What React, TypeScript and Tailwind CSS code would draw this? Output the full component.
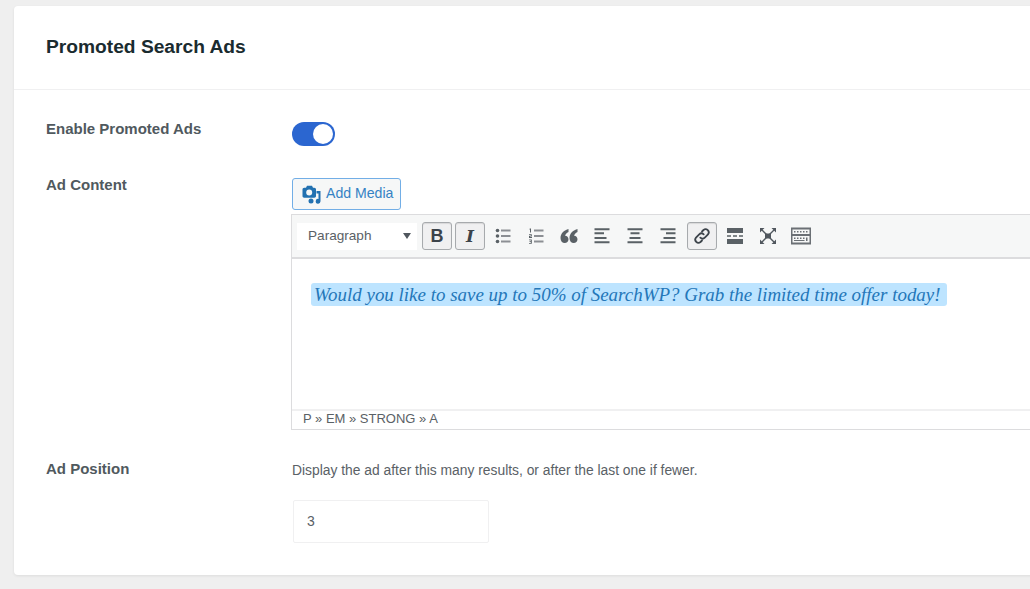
import React from "react";

const Ic = ({ children, w = 20 }: { children: React.ReactNode; w?: number }) => (
  <svg width={w} height={20} viewBox="0 0 20 20" fill="#5a6166" className="shrink-0">{children}</svg>
);

const Btn = ({ children, active, extra }: { children: React.ReactNode; active?: boolean; extra?: boolean }) => (
  <div className={active ? "w-[30px] h-[28px] flex items-center justify-center rounded-[3px] border border-[#a7aaad] bg-[#f0f0f1] mr-[3px] shadow-[inset_0_1px_1px_rgba(0,0,0,0.1)]" : extra ? "w-[30px] h-[28px] flex items-center justify-center mr-[4px]" : "w-[30px] h-[28px] flex items-center justify-center mr-[3px]"}>
    {children}
  </div>
);

const labelCls = "w-[246px] shrink-0 -mt-[1px] text-[15px] leading-[16px] font-bold text-[#50595e]";

export default function App() {
  return (
    <div className="w-[1030px] h-[589px] overflow-hidden bg-[#efefef] pt-[6px] pl-[14px] font-['Liberation_Sans',Arial,sans-serif]">
      <div className="w-[1040px] h-[569px] bg-white rounded-[4px] shadow-[0_1px_3px_rgba(0,0,0,0.08)]">
        <div className="h-[84px] border-b border-[#f0f0f1] pl-[32px] flex items-center pb-[1px]">
          <h1 className="text-[19.200px] leading-[22px] font-bold text-[#1a2b2f]">Promoted Search Ads</h1>
        </div>
        <div className="flex pl-[32px] pt-[32px]">
          <div className={labelCls}>Enable Promoted Ads</div>
          <div className="w-[43px] h-[24px] rounded-full bg-[#2b66d0] flex items-center justify-end pr-[2px]">
            <div className="w-[20px] h-[20px] rounded-full bg-white" />
          </div>
        </div>
        <div className="flex pl-[32px] pt-[32px]">
          <div className={labelCls}>Ad Content</div>
          <div className="flex-1 min-w-0">
            <div className="w-[109px] h-[32px] rounded-[3px] border border-[#72aee6] bg-[#f6f7f7] flex items-center pl-[9px] gap-[5px] text-[14.100px] text-[#3582c4]">
              <svg width="19" height="19" viewBox="0 0 19 19" fill="#2271b1" className="shrink-0">
                <path fillRule="evenodd" d="M.5 4.500C.5 3.500 1.200 2.800 2.200 2.800H4L5 .8h5l1 2h1.300c1 0 1.700.7 1.700 1.700v6.500c0 1-.7 1.700-1.700 1.700H2.200c-1 0-1.700-.7-1.700-1.700V4.500zM7.200 4.600a3 3 0 1 0 0 6 3 3 0 0 0 0-6z" />
                <path d="M14.500 6H18.500v10.300a2.400 2.400 0 1 1-2-2.400V8.500h-2z" />
                <circle cx="9" cy="16" r="2.500" />
              </svg>
              <span>Add Media</span>
            </div>
            <div className="mt-[4px] -ml-[1px] border border-[#dcdcde] border-r-0">
              <div className="h-[44px] bg-[#f6f7f7] border-b-2 border-[#dcdcde] flex items-center pl-[5px]">
                <div className="w-[120px] h-[27px] bg-white flex items-center justify-between pl-[11px] pr-[6px] text-[13.600px] text-[#5a6166] mr-[5px]">
                  <span>Paragraph</span>
                  <span className="w-0 h-0 border-l-[4px] border-r-[4px] border-t-[6px] border-l-transparent border-r-transparent border-t-[#50575e]" />
                </div>
                <Btn active><span className="text-[18px] leading-none font-bold text-[#3c434a]">B</span></Btn>
                <Btn active><span className="text-[17px] leading-none font-bold italic text-[#3c434a] font-['DejaVu_Serif',serif]">I</span></Btn>
                <Btn><Ic>
                  <circle cx="4.500" cy="4.500" r="1.800" /><circle cx="4.500" cy="10" r="1.800" /><circle cx="4.500" cy="15.500" r="1.800" />
                  <path fill="#8c8f94" d="M8 3.600h9.500v1.800H8zM8 9.100h9.500v1.800H8zM8 14.600h9.500v1.800H8z" />
                </Ic></Btn>
                <Btn><Ic>
                  <path fill="#8c8f94" d="M8 3.600h9.500v1.800H8zM8 9.100h9.500v1.800H8zM8 14.600h9.500v1.800H8z" />
                  <path d="M3.800 2.500h1.200v4H4v-3h-.7zM3 8.200h2.800v2.200H4v.7h2V12H3V9.800h1.800V9H3zM3 13.500h2.800v4.200H3v-.8h1.800v-.9H3.500v-.7h1.300v-1H3z" />
                </Ic></Btn>
                <Btn><Ic><path d="M9.500 3C5.500 4 1.500 7 1.500 12c0 3 1.800 5 4.200 5 2.200 0 3.800-1.600 3.800-3.700 0-2-1.400-3.500-3.400-3.600C6.400 8.400 7.500 7 9.500 6zM18.500 3c-4 1-8 4-8 9 0 3 1.800 5 4.200 5 2.200 0 3.800-1.600 3.800-3.700 0-2-1.400-3.500-3.400-3.600.3-1.300 1.400-2.700 3.400-3.700z" /></Ic></Btn>
                <Btn><Ic><path d="M2.500 2.300h15v2h-15zM2.500 6.300h9.500v2h-9.500zM2.500 11h12v2h-12zM2.500 15.300h15v2h-15z" /></Ic></Btn>
                <Btn><Ic><path d="M2.500 2.300h15v2h-15zM5.500 6.300h9v2h-9zM4.500 11h11v2h-11zM2.500 15.300h15v2h-15z" /></Ic></Btn>
                <Btn extra><Ic><path d="M2.500 2.300h15v2h-15zM8 6.300h9.500v2H8zM5.500 11h12v2h-12zM2.500 15.300h15v2h-15z" /></Ic></Btn>
                <Btn active>
                  <svg width="20" height="20" viewBox="0 0 20 20" fill="none" stroke="#3c434a" strokeWidth="1.800" strokeLinecap="round">
                    <path d="M8.300 11.700a3.200 3.200 0 0 0 4.500 0l3.200-3.200a3.200 3.200 0 0 0-4.500-4.500L10 5.500" />
                    <path d="M11.700 8.300a3.200 3.200 0 0 0-4.500 0L4 11.500A3.200 3.200 0 0 0 8.500 16l1.500-1.500" />
                  </svg>
                </Btn>
                <Btn><Ic><path d="M2 2h16v5H2zM2 9.300h4v1.400H2zM8 9.300h4v1.400H8zM14 9.300h4v1.400h-4zM2 13h16v5H2z" /></Ic></Btn>
                <Btn>
                  <svg width="20" height="20" viewBox="0 0 20 20" fill="#50575e">
                    <path d="M7 7.500h6v5H7z" />
                    <path d="M4 4l12 12M16 4L4 16" stroke="#50575e" strokeWidth="1.400" fill="none" />
                    <path d="M2 2h4.500L2 6.500zM18 2h-4.500L18 6.500zM2 18h4.500L2 13.500zM18 18h-4.500l4.500-4.500z" />
                  </svg>
                </Btn>
                <Btn>
                  <svg width="22" height="20" viewBox="0 0 22 20">
                    <path fill="#6b7075" fillRule="evenodd" d="M1 1.500h20v17H1zM2.500 3.500v4.500h17V3.500zM2.500 10v6.500h17V10z" />
                    <path fill="#6b7075" d="M4 5h1.500v1.500H4zM7 5h1.500v1.500H7zM10 5h1.500v1.500H10zM13 5h1.500v1.500H13zM16 5h1.500v1.500H16zM4 11.500h1.500V13H4zM7 11.500h1.500V13H7zM10 11.500h1.500V13H10zM13 11.500h1.500V13H13zM16 11.500h1.500v3.500H16zM4 14h10.500v1H4z" />
                  </svg>
                </Btn>
              </div>
              <div className="h-[150px] bg-white pt-[24px] pl-[19px] italic text-[#2477b9]">
                <span className="inline-block h-[23px] bg-[#bde4ff] pl-[3px] pr-[6px] font-['Liberation_Serif',serif] text-[18.970px] leading-[23px] rounded-[3px]">Would you like to save up to 50% of SearchWP? Grab the limited time offer today!</span>
              </div>
              <div className="h-[20px] border-t-2 border-[#f0f0f1] bg-white pl-[11px] text-[13px] leading-[16px] text-[#5a6166]">P » EM » STRONG » A</div>
            </div>
          </div>
        </div>
        <div className="flex pl-[32px] pt-[32px]">
          <div className={labelCls}>Ad Position</div>
          <div>
            <div className="text-[13.850px] leading-[16px] text-[#5a6166]">Display the ad after this many results, or after the last one if fewer.</div>
            <div className="mt-[22px] ml-[1px] w-[196px] h-[43px] border border-[#f0f0f1] rounded-[2px] flex items-center pl-[13px] text-[14px] text-[#5a6166]">3</div>
          </div>
        </div>
      </div>
    </div>
  );
}
